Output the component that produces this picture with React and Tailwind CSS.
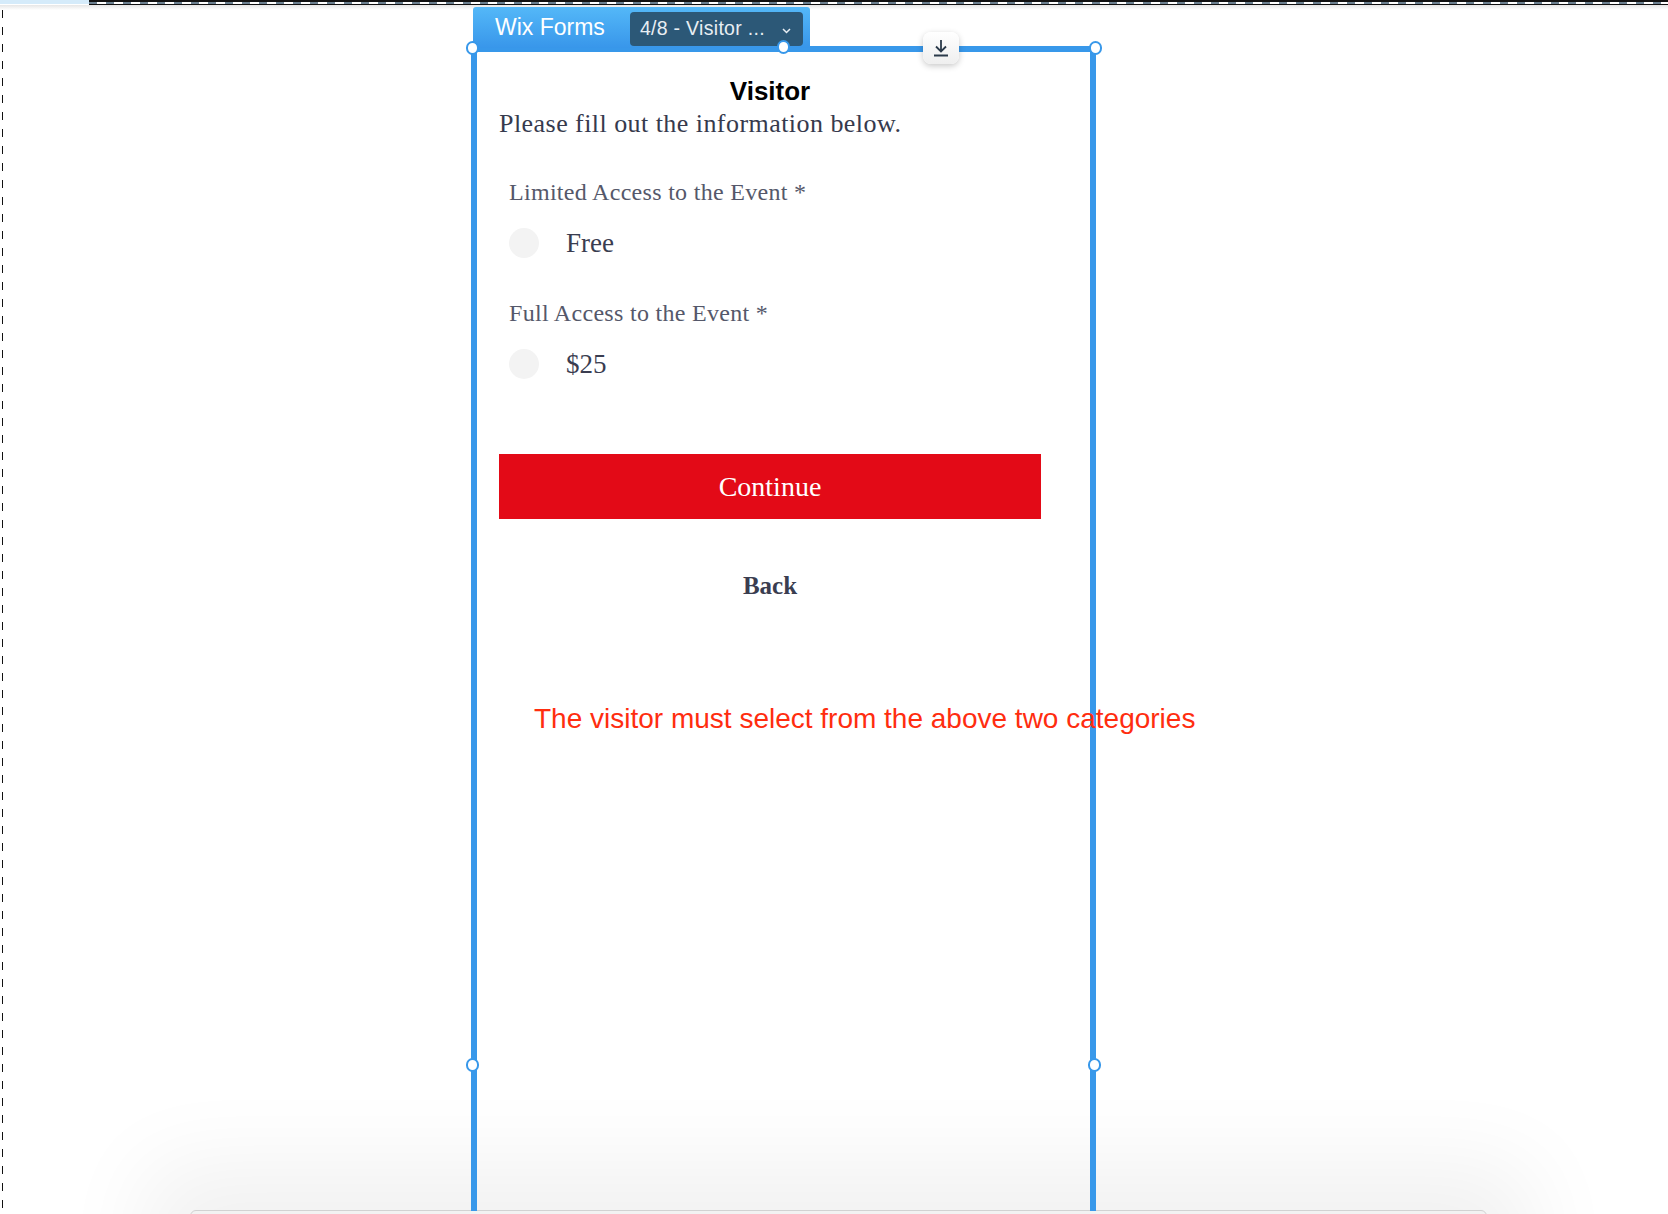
import React from 'react';

const serif = { fontFamily: '"Liberation Serif", "Times New Roman", serif' };
const sans = { fontFamily: '"Liberation Sans", Arial, Helvetica, sans-serif' };

function Handle({ className }) {
  return (
    <span
      className={`absolute w-[13px] h-[14px] rounded-full bg-white border-2 border-[#3898ea] ${className}`}
    />
  );
}

function RadioOption({ label }) {
  return (
    <div className="flex items-center gap-[27px] pl-[10px] h-[30px]">
      <span className="w-[30px] h-[30px] rounded-full bg-[#f3f3f3] shrink-0" />
      <span className="text-[27px] leading-[30px] text-[#3a3d50]" style={serif}>
        {label}
      </span>
    </div>
  );
}

function FieldLabel({ children }) {
  return (
    <div
      className="pl-[10px] text-[24px] leading-[28px] tracking-[0.3px] text-[#55586a]"
      style={serif}
    >
      {children}
    </div>
  );
}

export default function App() {
  return (
    <div className="relative w-[1668px] h-[1214px] overflow-hidden bg-white">
      {/* top ruler strip */}
      <div className="absolute top-0 left-0 right-0 h-[5px] flex">
        <div className="w-[89px] h-[4px] bg-[#d5ebfa]" />
        <div className="flex-1 flex flex-col">
          <div className="h-[1.5px] bg-[#111]" />
          <div className="h-[2.5px] bg-[repeating-linear-gradient(90deg,#6c8090_0_8px,#ffffff_8px_17px)]" />
          <div className="h-[1px] bg-[#111]" />
        </div>
      </div>
      <div className="absolute top-[5px] left-0 right-0 h-[5px] bg-gradient-to-b from-[#e6e6e6] to-white" />

      {/* left dashed guide */}
      <div className="absolute left-[2px] top-[10px] bottom-0 w-px bg-[repeating-linear-gradient(180deg,#111_0_8px,transparent_8px_17px)]" />

      {/* bottom panel shadow */}
      <div className="absolute top-[1210px] left-[190px] w-[1297px] h-[120px] rounded-t-md bg-[#f2f2f2] border border-[#d2d2d2] shadow-[0_0_90px_45px_rgba(0,0,0,0.06)]" />

      {/* form frame */}
      <div className="absolute left-[471px] top-[46px] w-[625px] h-[1165px] border-[6px] border-b-0 border-[#3898ea]">
        <div className="pl-[22px] pt-[26px] w-[564px]">
          <h1
            className="text-center text-[26px] leading-[26px] font-bold text-black"
            style={sans}
          >
            Visitor
          </h1>
          <p
            className="mt-[9px] text-[26px] leading-[22px] tracking-[0.45px] text-[#363a4d] whitespace-nowrap"
            style={serif}
          >
            Please fill out the information below.
          </p>

          <div className="mt-[43px]">
            <FieldLabel>Limited Access to the Event *</FieldLabel>
            <div className="mt-[22px]">
              <RadioOption label="Free" />
            </div>
          </div>

          <div className="mt-[41px]">
            <FieldLabel>Full Access to the Event *</FieldLabel>
            <div className="mt-[22px]">
              <RadioOption label="$25" />
            </div>
          </div>

          <button
            className="mt-[75px] w-[542px] h-[65px] bg-[#e30a17] text-white text-[28px] flex items-center justify-center"
            style={serif}
          >
            Continue
          </button>

          <div
            className="mt-[52px] text-center text-[25px] leading-[30px] font-bold text-[#3a3d50]"
            style={serif}
          >
            Back
          </div>

          <div
            className="mt-[102px] ml-[35px] text-[28px] leading-[32px] text-[#ff2d0f] whitespace-nowrap"
            style={sans}
          >
            The visitor must select from the above two categories
          </div>
        </div>
      </div>

      {/* Wix Forms tab */}
      <div className="absolute left-[473px] top-[7px] w-[337px] h-[41px] rounded-t-[3px] bg-gradient-to-b from-[#54b8f8] to-[#3896ea] flex items-start">
        <span
          className="ml-[22px] mt-[6px] text-[23px] leading-[28px] text-white font-light"
          style={sans}
        >
          Wix Forms
        </span>
        <div className="ml-[25px] mt-[5px] w-[173px] h-[34px] rounded-[4px] bg-[#2c5877] flex items-center pl-[10px] pr-[12px]">
          <span className="text-[19.5px] leading-none tracking-[0.3px] text-[#e8eef3] flex-1 whitespace-nowrap" style={sans}>
            4/8 - Visitor ...
          </span>
          <svg width="9" height="6" viewBox="0 0 9 6" className="mt-[3px]">
            <path d="M1 1l3.5 3.5L8 1" stroke="#e8eef3" strokeWidth="1.5" fill="none" />
          </svg>
        </div>
      </div>

      {/* download button */}
      <div className="absolute left-[923px] top-[32px] w-[36px] h-[32px] rounded-lg bg-gradient-to-b from-white to-[#efefef] shadow-[0_2px_6px_rgba(0,0,0,0.22)] flex items-center justify-center">
        <svg width="16" height="18" viewBox="0 0 16 18">
          <path d="M8 1v11M3 7.5l5 5 5-5" stroke="#2b3a4a" strokeWidth="1.8" fill="none" />
          <rect x="1" y="15.5" width="14" height="2" fill="#2b3a4a" />
        </svg>
      </div>

      {/* selection handles */}
      <Handle className="left-[466px] top-[41px]" />
      <Handle className="left-[777px] top-[40px]" />
      <Handle className="left-[1089px] top-[41px]" />
      <Handle className="left-[466px] top-[1058px]" />
      <Handle className="left-[1088px] top-[1058px]" />
    </div>
  );
}
